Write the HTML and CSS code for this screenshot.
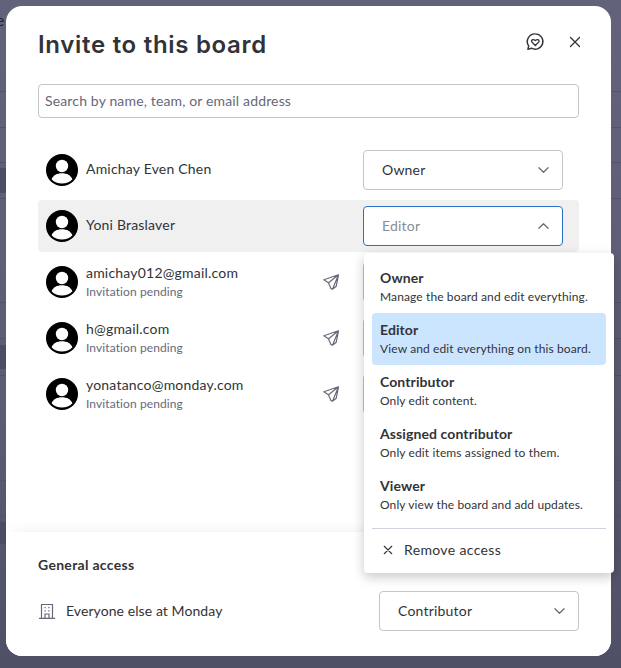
FILE: index.html
```html
<!DOCTYPE html>
<html lang="en">
<head>
<meta charset="utf-8">
<title>Invite to this board</title>
<link rel="stylesheet" href="styles.css">
</head>
<body>
<svg class="defs" width="0" height="0" aria-hidden="true">
  <defs>
    <symbol id="avatar" viewBox="0 0 32 32">
      <circle cx="16" cy="16" r="16" fill="#000"/>
      <circle cx="16" cy="12" r="6.200" fill="#fff"/>
      <path d="M5.600 25.200c1.600-4 5.400-6 10.400-6s8.800 2 10.400 6c-2.600 2.900-6.300 4.300-10.400 4.300s-7.800-1.400-10.400-4.300z" fill="#fff"/>
    </symbol>
    <symbol id="send" viewBox="0 0 18 18">
      <path d="M16.500 1.800 1.800 6.800l4.700 2.900 2.300 5.700 1.700.8z M16.500 1.800 6.500 9.700 M16.500 1.800 14.200 13.300 10.500 16.200" fill="none" stroke="#676879" stroke-width="1.200" stroke-linejoin="round" stroke-linecap="round"/>
    </symbol>
    <symbol id="chev" viewBox="0 0 12 8">
      <path d="M1 1.500 6 6.500l5-5" fill="none" stroke="#676879" stroke-width="1.300" stroke-linecap="round" stroke-linejoin="round"/>
    </symbol>
    <symbol id="cross" viewBox="0 0 12 12">
      <path d="M1.500 1.500 10.500 10.500M10.500 1.500 1.500 10.500" fill="none" stroke="#323338" stroke-width="1.300" stroke-linecap="round"/>
    </symbol>
  </defs>
</svg>

<div class="backdrop">
  <div class="stray">e</div>
  <main class="modal">
    <div class="modal-body">
      <header class="modal-head">
        <h1 class="title">Invite to this board</h1>
        <div class="head-actions">
          <svg class="feedback" viewBox="0 0 18 18" aria-hidden="true">
            <path d="M9.300 1.700a6.900 6.900 0 1 1-3.500 12.900l-3.200 1 .7-3.100A6.900 6.900 0 0 1 9.300 1.700z" fill="none" stroke="#323338" stroke-width="1.300" stroke-linejoin="round"/>
            <path d="M9.300 12.200 6.300 9.100c-1.200-1.500.9-3.300 3-1.500 2.100-1.800 4.200 0 3 1.500z" fill="none" stroke="#323338" stroke-width="1.200" stroke-linejoin="round"/>
          </svg>
          <svg class="close" aria-hidden="true"><use href="#cross"/></svg>
        </div>
      </header>

      <div class="search">Search by name, team, or email address</div>

      <ul class="people">
        <li class="person">
          <svg class="avatar"><use href="#avatar"/></svg>
          <div class="who"><div class="name">Amichay Even Chen</div></div>
          <div class="select"><span>Owner</span><svg class="chev"><use href="#chev"/></svg></div>
        </li>
        <li class="person person-active">
          <svg class="avatar"><use href="#avatar"/></svg>
          <div class="who"><div class="name">Yoni Braslaver</div></div>
          <div class="select select-open"><span>Editor</span><svg class="chev chev-up"><use href="#chev"/></svg></div>
        </li>
        <li class="person">
          <svg class="avatar"><use href="#avatar"/></svg>
          <div class="who who-invited"><div class="name">amichay012@gmail.com</div><div class="pending">Invitation pending</div></div>
          <svg class="send"><use href="#send"/></svg>
          <div class="select"></div>
        </li>
        <li class="person">
          <svg class="avatar"><use href="#avatar"/></svg>
          <div class="who who-invited"><div class="name">h@gmail.com</div><div class="pending">Invitation pending</div></div>
          <svg class="send"><use href="#send"/></svg>
          <div class="select"></div>
        </li>
        <li class="person">
          <svg class="avatar"><use href="#avatar"/></svg>
          <div class="who who-invited"><div class="name">yonatanco@monday.com</div><div class="pending">Invitation pending</div></div>
          <svg class="send"><use href="#send"/></svg>
          <div class="select"></div>
        </li>
      </ul>
    </div>

    <footer class="access">
      <h2 class="access-title">General access</h2>
      <div class="access-row">
        <svg class="building" viewBox="0 0 18 18" aria-hidden="true">
          <path d="M3.500 16V2.500h11V16M1 16.300h16M7 16v-4h4v4" fill="none" stroke="#676879" stroke-width="1.200"/>
          <path d="M6.500 5h1.300v1.300H6.500zM10.200 5h1.300v1.300h-1.300zM6.500 8.200h1.300v1.300H6.500zM10.200 8.200h1.300v1.300h-1.300z" fill="#676879"/>
        </svg>
        <div class="access-label">Everyone else at Monday</div>
        <div class="select"><span>Contributor</span><svg class="chev"><use href="#chev"/></svg></div>
      </div>
    </footer>

    <div class="menu">
      <div class="opt"><div class="opt-name">Owner</div><div class="opt-desc">Manage the board and edit everything.</div></div>
      <div class="opt opt-on"><div class="opt-name">Editor</div><div class="opt-desc">View and edit everything on this board.</div></div>
      <div class="opt"><div class="opt-name">Contributor</div><div class="opt-desc">Only edit content.</div></div>
      <div class="opt"><div class="opt-name">Assigned contributor</div><div class="opt-desc">Only edit items assigned to them.</div></div>
      <div class="opt"><div class="opt-name">Viewer</div><div class="opt-desc">Only view the board and add updates.</div></div>
      <div class="menu-rule"></div>
      <div class="remove"><svg class="remove-x" aria-hidden="true"><use href="#cross"/></svg><span>Remove access</span></div>
    </div>
  </main>
</div>
</body>
</html>
```

FILE: styles.css
```css
* { box-sizing: border-box; }
html, body { margin: 0; padding: 0; height: 100%; }
body { font-family: "Lato", "Noto Sans", sans-serif; color: #323338; overflow: hidden; }
.defs { position: absolute; }
.backdrop {
  position: relative;
  width: 621px;
  height: 668px;
  padding: 6px 10px 12px 6px;
  background-color: #5e5e76;
  background-image:
    linear-gradient(#525268, #525268), linear-gradient(#525268, #525268), linear-gradient(#525268, #525268), linear-gradient(#525268, #525268),
    linear-gradient(#525268, #525268), linear-gradient(#525268, #525268), linear-gradient(#525268, #525268),
    linear-gradient(#525268, #525268), linear-gradient(#525268, #525268), linear-gradient(#525268, #525268),
    linear-gradient(#4c4c62, #4c4c62), linear-gradient(#4c4c62, #4c4c62), linear-gradient(#4c4c62, #4c4c62),
    linear-gradient(180deg, #62627b 0%, #5c5c74 60%, #4f5065 100%);
  background-repeat: no-repeat;
  background-size:
    621px 1px, 621px 1px, 621px 1px, 621px 1px,
    621px 1px, 621px 1px, 621px 1px,
    621px 1px, 621px 1px, 621px 1px,
    6px 25px, 6px 24px, 6px 22px,
    100% 100%;
  background-position:
    0 91px, 0 127px, 0 162px, 0 198px,
    0 302px, 0 338px, 0 375px,
    0 480px, 0 515px, 0 550px,
    0 168px, 0 345px, 0 522px,
    0 0;
}
.stray { position: absolute; left: -4px; top: 10px; font-size: 16px; color: #23232e; }
.modal {
  position: relative;
  width: 605px;
  height: 650px;
  background: #fff;
  border-radius: 16px;
  display: flex;
  flex-direction: column;
}
.modal-body { flex: 1; padding: 0 32px; border-radius: 16px 16px 0 0; }
.modal-head { display: flex; justify-content: space-between; align-items: center; height: 76px; margin-bottom: 2px; }
.title { margin: 0; font-family: "Inter", sans-serif; font-size: 24px; font-weight: 600; color: #323338; letter-spacing: 0.7px; }
.head-actions { display: flex; align-items: center; gap: 24px; margin-right: -2px; margin-top: -4px; }
.feedback { width: 20px; height: 20px; }
.close { width: 12px; height: 12px; }
.search {
  height: 34px;
  border: 1px solid #c4c4ca;
  border-radius: 4px;
  padding-left: 6px;
  font-size: 14px;
  line-height: 32px;
  color: #676879;
  letter-spacing: 0.15px;
}
.people { list-style: none; margin: 24px 0 0; padding: 0; }
.person { display: flex; align-items: center; height: 56px; padding: 0 16px 0 8px; border-radius: 4px; }
.person-active { height: 52px; margin: 2px 0; background: #f0f0f0; }
.avatar { width: 32px; height: 32px; flex: none; }
.who { flex: 1; margin-left: 8px; padding-bottom: 2px; }
.who-invited { padding-bottom: 0; }
.name { font-size: 14px; line-height: 20px; letter-spacing: 0.2px; color: #323338; }
.pending { font-size: 12px; line-height: 18px; letter-spacing: 0.1px; color: #676879; }
.send { width: 18px; height: 18px; flex: none; margin-right: 23px; }
.select {
  flex: none;
  width: 200px;
  height: 40px;
  border: 1px solid #c4c4ca;
  border-radius: 4px;
  background: #fff;
  display: flex;
  align-items: center;
  justify-content: space-between;
  padding: 0 13px 2px 18px;
  font-size: 14px;
  letter-spacing: 0.2px;
  color: #323338;
}
.select-open { border-color: #2a6fc9; color: #8a8c96; }
.chev { width: 11px; height: 8px; margin-top: 2px; }
.chev-up { transform: rotate(180deg); }
.access {
  height: 124px;
  padding: 23px 32px 0;
  background: #fff;
  border-radius: 0 0 16px 16px;
  box-shadow: 0 -8px 14px -8px rgba(0, 0, 0, 0.07);
}
.access-title { margin: 0; font-size: 14px; line-height: 20px; font-weight: 700; letter-spacing: 0.3px; color: #323338; }
.access-row { display: flex; align-items: center; margin-top: 16px; }
.building { width: 18px; height: 18px; flex: none; }
.access-label { flex: 1; margin-left: 10px; padding-bottom: 2px; font-size: 14px; letter-spacing: 0.08px; color: #323338; }
.menu {
  position: absolute;
  left: 358px;
  top: 247px;
  width: 250px;
  height: 320px;
  padding: 8px 8px 0;
  background: #fff;
  border-radius: 4px;
  box-shadow: 0 4px 12px rgba(0, 0, 0, 0.22);
}
.opt { height: 52px; padding: 8px; border-radius: 4px; }
.opt-on { background: #cce5ff; }
.opt-name { font-size: 14px; line-height: 18px; font-weight: 700; letter-spacing: 0.1px; color: #323338; }
.opt-desc { margin-top: 1px; font-size: 12px; line-height: 18px; letter-spacing: 0.12px; color: #323338; }
.menu-rule { height: 1px; margin-top: 7px; background: #d0d2dc; }
.remove { display: flex; align-items: center; height: 41px; padding-left: 11px; font-size: 14px; letter-spacing: 0.35px; }
.remove-x { width: 10px; height: 10px; margin-right: 11px; }
```
